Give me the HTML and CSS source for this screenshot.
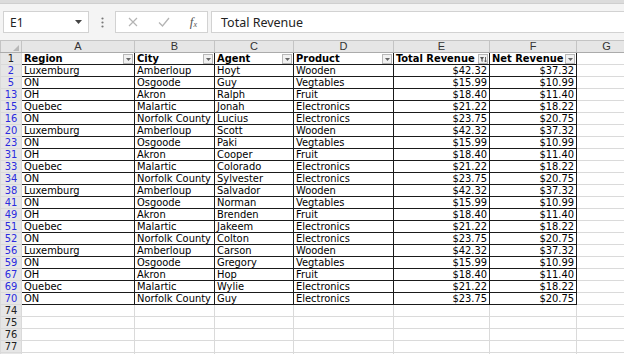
FILE: index.html
```html
<!DOCTYPE html>
<html lang="en">
<head>
    <meta charset="UTF-8">
    <title>Revenue - Filtered</title>
    <link rel="stylesheet" href="styles.css">
</head>
<body>
    <div class="app">
        <div class="ribbon-edge"></div>

        <!-- formula bar -->
        <div class="formula-bar">
            <div class="name-box">
                <span>E1</span>
                <svg class="caret" width="7" height="4" viewBox="0 0 7 4"><path d="M0 0h7L3.5 4z" fill="#444"/></svg>
            </div>
            <div class="grip">
                <svg width="3" height="11" viewBox="0 0 3 11"><circle cx="1.5" cy="1.5" r="1.1" fill="#777"/><circle cx="1.5" cy="5.5" r="1.1" fill="#777"/><circle cx="1.5" cy="9.5" r="1.1" fill="#777"/></svg>
            </div>
            <div class="fx-buttons">
                <svg class="btn-x" width="10" height="10" viewBox="0 0 10 10"><path d="M1 1l8 8M9 1l-8 8" stroke="#b4b4b4" stroke-width="1.2"/></svg>
                <svg class="btn-ok" width="12" height="10" viewBox="0 0 12 10"><path d="M1 5.5l3.5 3.5L11 1" stroke="#b4b4b4" stroke-width="1.3" fill="none"/></svg>
                <span class="fx"><i>f</i><sub>x</sub></span>
            </div>
            <div class="formula-input">Total Revenue</div>
        </div>

        <div class="sheet-gap"></div>

        <!-- sheet -->
        <table class="grid">
            <colgroup>
                <col class="c-row">
                <col class="c-a">
                <col class="c-b">
                <col class="c-c">
                <col class="c-d">
                <col class="c-e">
                <col class="c-f">
                <col class="c-g">
            </colgroup>
            <thead>
                <tr class="col-heads">
                    <th class="corner"><span class="corner-tri"></span></th>
                    <th>A</th><th>B</th><th>C</th><th>D</th><th>E</th><th>F</th><th>G</th>
                </tr>
            </thead>
            <tbody id="rows"></tbody>
        </table>
    </div>

    <script>
        // filtered rows of the table
        const data = [
            [2, "Luxemburg", "Amberloup", "Hoyt", "Wooden", "$42.32", "$37.32"],
            [5, "ON", "Osgoode", "Guy", "Vegtables", "$15.99", "$10.99"],
            [13, "OH", "Akron", "Ralph", "Fruit", "$18.40", "$11.40"],
            [15, "Quebec", "Malartic", "Jonah", "Electronics", "$21.22", "$18.22"],
            [16, "ON", "Norfolk County", "Lucius", "Electronics", "$23.75", "$20.75"],
            [20, "Luxemburg", "Amberloup", "Scott", "Wooden", "$42.32", "$37.32"],
            [23, "ON", "Osgoode", "Paki", "Vegtables", "$15.99", "$10.99"],
            [31, "OH", "Akron", "Cooper", "Fruit", "$18.40", "$11.40"],
            [33, "Quebec", "Malartic", "Colorado", "Electronics", "$21.22", "$18.22"],
            [34, "ON", "Norfolk County", "Sylvester", "Electronics", "$23.75", "$20.75"],
            [38, "Luxemburg", "Amberloup", "Salvador", "Wooden", "$42.32", "$37.32"],
            [41, "ON", "Osgoode", "Norman", "Vegtables", "$15.99", "$10.99"],
            [49, "OH", "Akron", "Brenden", "Fruit", "$18.40", "$11.40"],
            [51, "Quebec", "Malartic", "Jakeem", "Electronics", "$21.22", "$18.22"],
            [52, "ON", "Norfolk County", "Colton", "Electronics", "$23.75", "$20.75"],
            [56, "Luxemburg", "Amberloup", "Carson", "Wooden", "$42.32", "$37.32"],
            [59, "ON", "Osgoode", "Gregory", "Vegtables", "$15.99", "$10.99"],
            [67, "OH", "Akron", "Hop", "Fruit", "$18.40", "$11.40"],
            [69, "Quebec", "Malartic", "Wylie", "Electronics", "$21.22", "$18.22"],
            [70, "ON", "Norfolk County", "Guy", "Electronics", "$23.75", "$20.75"]
        ];
        const headers = ["Region", "City", "Agent", "Product", "Total Revenue", "Net Revenue"];

        const dropSvg = '<svg width="5" height="3" viewBox="0 0 5 3"><path d="M0 0h5L2.5 3z" fill="#666"/></svg>';
        const sortSvg = '<svg width="7" height="7" viewBox="0 0 7 7"><path d="M0 1h4L2.6 3.2V6L1.4 5.2V3.2z" fill="#555"/><path d="M5.5 1v5M4.3 4.6l1.2 1.4 1.2-1.4" stroke="#555" stroke-width="0.9" fill="none"/></svg>';

        const tbody = document.getElementById("rows");

        // header row
        let html = '<tr class="head-row"><th class="rh">1</th>';
        headers.forEach((h, i) => {
            const icon = i === 4 ? sortSvg : dropSvg;
            html += `<td class="tbl head"><span class="head-text">${h}</span><span class="filter-btn">${icon}</span></td>`;
        });
        html += '<td></td></tr>';

        data.forEach(row => {
            html += `<tr><th class="rh filtered">${row[0]}</th>`;
            for (let i = 1; i <= 6; i++) {
                const cls = i >= 5 ? "tbl num" : "tbl";
                html += `<td class="${cls}">${row[i]}</td>`;
            }
            html += '<td></td></tr>';
        });

        // empty rows below the table (last one is cut by the window)
        ["74", "75", "76", "77", ""].forEach(n => {
            html += `<tr><th class="rh">${n}</th><td></td><td></td><td></td><td></td><td></td><td></td><td></td></tr>`;
        });
        tbody.innerHTML = html;
    </script>
</body>
</html>
```

FILE: styles.css
```css
body {
    margin: 0;
    background: #fff;
    font-family: "DejaVu Sans Condensed", Tahoma, "DejaVu Sans", sans-serif;
    overflow: hidden;
}

.app {
    width: 624px;
    height: 354px;
    overflow: hidden;
    background: #fff;
}

.ribbon-edge {
    height: 3px;
    background: #dcdcdc;
    border-bottom: 1px solid #cfcfcf;
}

/* formula bar */
.formula-bar {
    height: 31px;
    box-sizing: border-box;
    padding: 7px 0 0 3px;
    display: flex;
    align-items: flex-start;
    background: #f4f4f4;
}

.name-box,
.fx-buttons,
.formula-input {
    height: 22px;
    box-sizing: border-box;
    background: #fff;
    border: 1px solid #d2d2d2;
    display: flex;
    align-items: center;
}

.name-box {
    width: 86px;
    padding: 0 6px 0 6px;
    justify-content: space-between;
    font-family: "Noto Sans", "Open Sans", sans-serif;
    font-size: 12px;
    color: #222;
}

.grip {
    width: 26px;
    height: 22px;
    display: flex;
    align-items: center;
    justify-content: center;
}

.fx-buttons {
    width: 93px;
    padding: 0 10px 0 12px;
    justify-content: space-between;
}

.fx {
    font-family: "Liberation Serif", serif;
    font-size: 13px;
    color: #555;
    line-height: 1;
}

.fx sub {
    font-size: 8px;
    font-style: italic;
    vertical-align: -1px;
}

.formula-input {
    flex: 1;
    margin-left: 3px;
    border-right: none;
    padding-left: 9px;
    font-family: "Noto Sans", "Open Sans", sans-serif;
    font-size: 12.5px;
    color: #222;
}

.sheet-gap {
    height: 5px;
    background: #f4f4f4;
}

/* grid */
.grid {
    border-collapse: collapse;
    table-layout: fixed;
    width: 636px;
    font-size: 11px;
    color: #000;
}

.c-row { width: 21px; }
.c-a { width: 113px; }
.c-b { width: 80px; }
.c-c { width: 79px; }
.c-d { width: 100px; }
.c-e { width: 96px; }
.c-f { width: 87px; }
.c-g { width: 60px; }

.grid td,
.grid th {
    height: 11px;
    padding: 0 2px;
    line-height: 11px;
    white-space: nowrap;
    overflow: hidden;
    border: 1px solid #dadada;
}

.col-heads th {
    background: #e6e6e6;
    border: 1px solid #c4c4c4;
    border-bottom-color: #ababab;
    font-family: "Liberation Sans", Arial, sans-serif;
    font-weight: normal;
    font-size: 11px;
    color: #333;
    text-align: center;
}

.corner {
    position: relative;
}

.corner-tri {
    position: absolute;
    right: 2px;
    bottom: 1px;
    width: 0;
    height: 0;
    border-left: 6px solid transparent;
    border-bottom: 6px solid #b8b8b8;
}

.rh {
    background: #e6e6e6;
    border: 1px solid #c4c4c4;
    border-right-color: #ababab;
    font-weight: normal;
    color: #222;
    text-align: center;
    padding: 0;
}

.rh.filtered {
    color: #2b2bdf;
}

.grid td.tbl {
    border: 1px solid #1a1a1a;
}

.grid td.num {
    text-align: right;
}

.grid td.head {
    position: relative;
    font-weight: bold;
    padding-right: 12px;
}

.filter-btn {
    position: absolute;
    right: 1px;
    top: 1px;
    width: 8px;
    height: 8px;
    border: 1px solid #b8b8b8;
    background: #f1f1f1;
    display: flex;
    align-items: center;
    justify-content: center;
}
```
